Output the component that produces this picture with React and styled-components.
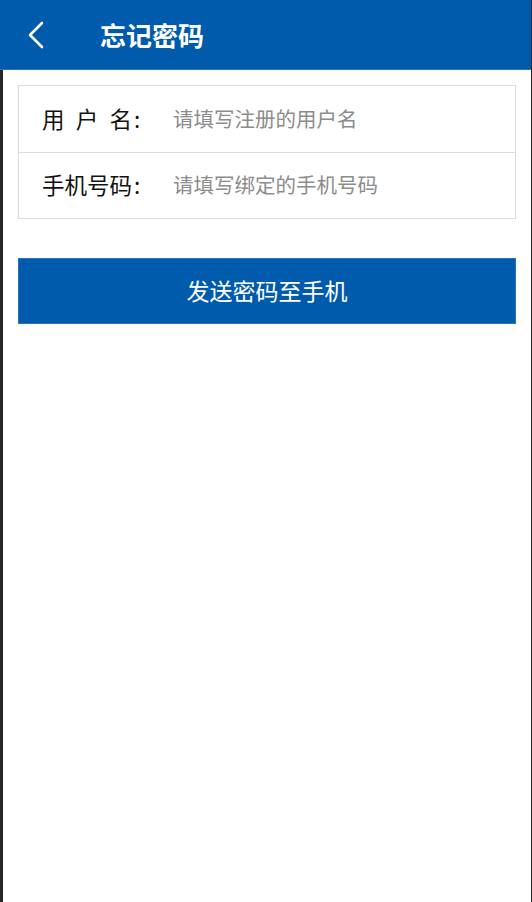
import React, {useState} from 'react';
import styled, {createGlobalStyle} from 'styled-components';

export default function App() {
    const [username, setUsername] = useState('');
    const [phone, setPhone] = useState('');

    return (
        <>
            <GlobalStyle />
            <Screen>
                <Header>
                    <BackButton aria-label="返回">
                        <svg width="18" height="28" viewBox="0 0 18 28" fill="none">
                            <path d="M15 2 L3 14 L15 26" stroke="#fff" strokeWidth="2.6" strokeLinecap="round" strokeLinejoin="round" />
                        </svg>
                    </BackButton>
                    <Title>忘记密码</Title>
                </Header>

                <Body>
                    <FormCard>
                        <FieldRow>
                            <Label>
                                <Justified>用户名</Justified>:
                            </Label>
                            <Input
                                placeholder="请填写注册的用户名"
                                value={username}
                                onChange={(e) => setUsername(e.target.value)}
                            />
                        </FieldRow>
                        <FieldRow>
                            <Label>
                                <Justified>手机号码</Justified>:
                            </Label>
                            <Input
                                placeholder="请填写绑定的手机号码"
                                value={phone}
                                onChange={(e) => setPhone(e.target.value)}
                            />
                        </FieldRow>
                    </FormCard>

                    <SubmitButton type="button">发送密码至手机</SubmitButton>
                </Body>
            </Screen>
        </>
    );
}

const GlobalStyle = createGlobalStyle`
    html, body {
        margin: 0;
        padding: 0;
        background: #262626;
    }
    body {
        font-family: "Noto Sans CJK SC", "Noto Sans", sans-serif;
    }
    * {
        box-sizing: border-box;
    }
`;

const Screen = styled.div`
    min-height: 902px;
    display: flex;
    flex-direction: column;
    padding-right: 1px;
`;

const Header = styled.div`
    height: 70px;
    background: #005bac;
    display: flex;
    align-items: center;
    padding-left: 27px;
    border-bottom: 1px solid #2f74b8;
`;

const BackButton = styled.button`
    background: none;
    border: none;
    padding: 0;
    width: 20px;
    height: 30px;
    display: flex;
    align-items: center;
    cursor: pointer;
`;

const Title = styled.h1`
    margin: 0 0 0 53px;
    color: #fff;
    font-size: 26px;
    font-weight: 700;
`;

const Body = styled.div`
    flex: 1;
    background: #fff;
    margin-left: 3px;
    padding: 15px 15px 0;
`;

const FormCard = styled.div`
    border: 1px solid #dcdcdc;
    background: #fff;
`;

const FieldRow = styled.div`
    height: 66px;
    display: flex;
    align-items: center;
    padding-left: 23px;
    padding-bottom: 3px;

    & + & {
        border-top: 1px solid #dcdcdc;
    }
`;

const Label = styled.label`
    display: flex;
    align-items: center;
    width: 131px;
    flex-shrink: 0;
    font-size: 22.5px;
    color: #111;
`;

const Justified = styled.span`
    display: inline-block;
    width: 90px;
    text-align: justify;
    text-align-last: justify;
    margin-right: 2px;
`;

const Input = styled.input`
    flex: 1;
    min-width: 0;
    border: none;
    outline: none;
    background: transparent;
    font-family: inherit;
    font-size: 20.5px;
    color: #333;
    padding: 0;

    &::placeholder {
        color: #8c8c8c;
    }
`;

const SubmitButton = styled.button`
    display: block;
    width: 100%;
    height: 66px;
    margin-top: 39px;
    background: #005bac;
    border: 1px solid #2a72bd;
    color: #fff;
    font-family: inherit;
    font-size: 23px;
    padding-bottom: 3px;
    cursor: pointer;
`;
